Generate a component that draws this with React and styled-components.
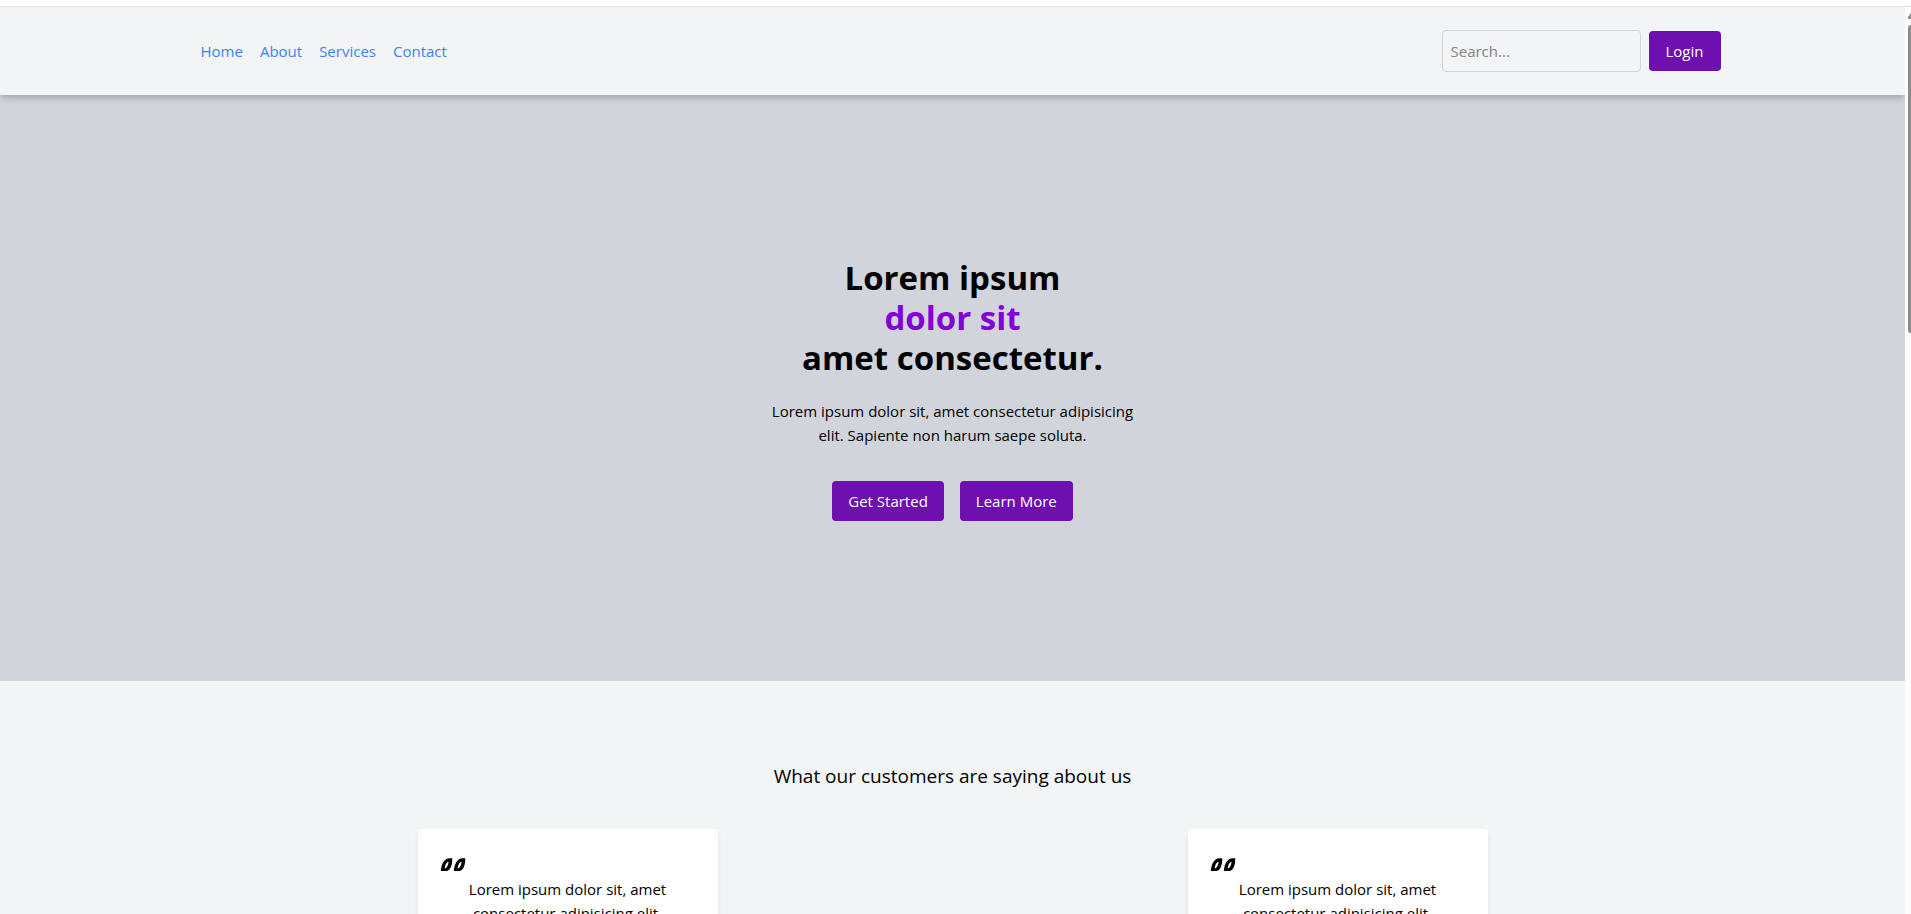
import React from 'react';
import styled, { createGlobalStyle } from 'styled-components';

const GlobalStyle = createGlobalStyle`
  *, *::before, *::after { box-sizing: border-box; }
  body {
    margin: 0;
    background: #fff;
    color: #000;
    font-family: "Segoe UI", "Open Sans", "Noto Sans", sans-serif;
    font-size: 15px;
    line-height: 24px;
  }
  h1, h2, p, ul, blockquote { margin: 0; padding: 0; }
`;

const Frame = styled.div`
  height: 100vh;
  padding-top: 6px;
  display: flex;
  overflow: hidden;
`;

const Page = styled.div`
  flex: 1;
  min-width: 0;
  border-top: 1px solid #dfe2dc;
  background: #f3f4f6;
  overflow: hidden;
`;

const Header = styled.header`
  position: relative;
  padding: 23px 0;
  background: #f3f4f6;
  box-shadow: 0 4px 6px -1px rgba(0, 0, 0, 0.1), 0 2px 8px rgba(0, 0, 0, 0.14);
`;

const Container = styled.div`
  width: 100%;
  max-width: 1536px;
  margin: 0 auto;
  display: flex;
  align-items: center;
  justify-content: space-between;
`;

const Nav = styled.nav`
  display: flex;
  gap: 17px;
  padding-left: 16px;
`;

const NavLink = styled.a`
  color: #3b82f6;
  text-decoration: none;
`;

const Actions = styled.form`
  display: flex;
  align-items: center;
  gap: 8px;
`;

const SearchInput = styled.input`
  width: 199px;
  height: 42px;
  padding: 8px;
  border: 1px solid #d1d5db;
  border-radius: 4px;
  background: transparent;
  font: inherit;
  &::placeholder { color: #848484; opacity: 1; }
`;

const Button = styled.button`
  min-width: 72px;
  height: 40px;
  padding: 8px 16px;
  border: 0;
  border-radius: 4px;
  background: #6e0fb0;
  color: #fff;
  font: inherit;
`;

const Hero = styled.section`
  display: flex;
  flex-direction: column;
  align-items: center;
  padding: 163px 0 160px;
  background: #d1d5db;
  text-align: center;
`;

const HeroTitle = styled.h1`
  font-size: 33px;
  line-height: 40px;
  font-weight: 700;
`;

const TitleLine = styled.span`
  display: block;
  color: ${(p) => (p.$accent ? '#8200db' : 'inherit')};
`;

const HeroText = styled.p`
  max-width: 384px;
  margin-top: 21px;
`;

const HeroButtons = styled.div`
  display: flex;
  gap: 16px;
  margin-top: 34px;
`;

const Testimonials = styled.section`
  padding-top: 81px;
`;

const SectionTitle = styled.h2`
  margin-bottom: 39px;
  font-size: 19px;
  line-height: 28px;
  font-weight: 400;
  text-align: center;
`;

const CardRow = styled.div`
  max-width: 1540px;
  margin: 0 auto;
  display: flex;
  justify-content: space-around;
`;

const Card = styled.article`
  width: 300px;
  padding: 24px;
  border-radius: 4px;
  background: #fff;
  box-shadow: 0 4px 6px -1px rgba(0, 0, 0, 0.1);
`;

const QuoteMark = styled.svg`
  display: block;
  width: 24px;
  height: 24px;
  overflow: visible;
`;

const Quote = styled.blockquote`
  padding: 0 16px;
  text-align: center;
`;

const Scrollbar = styled.div`
  width: 6px;
  display: flex;
  flex-direction: column;
  align-items: flex-end;
  border-top: 1px solid #dfe2dc;
  background: #fcfcfc;
  overflow: hidden;
`;

const ScrollArrow = styled.svg`
  flex: none;
  width: 3px;
  height: 6px;
  margin: 6px 0;
`;

const ScrollThumb = styled.div`
  flex: none;
  width: 3px;
  height: 34%;
  border-radius: 3px 0 0 3px;
  background: #8b8b8b;
`;

const links = ['Home', 'About', 'Services', 'Contact'];
const reviews = ['first', 'second'];

export default function App() {
  return (
    <>
      <GlobalStyle />
      <Frame>
        <Page>
          <Header>
            <Container>
              <Nav>
                {links.map((l) => (
                  <NavLink key={l} href={`#${l.toLowerCase()}`}>{l}</NavLink>
                ))}
              </Nav>
              <Actions>
                <SearchInput type="text" placeholder="Search..." aria-label="Search" />
                <Button type="button">Login</Button>
              </Actions>
            </Container>
          </Header>
          <Hero>
            <HeroTitle>
              <TitleLine>Lorem ipsum</TitleLine>
              <TitleLine $accent>dolor sit</TitleLine>
              <TitleLine>amet consectetur.</TitleLine>
            </HeroTitle>
            <HeroText>
              Lorem ipsum dolor sit, amet consectetur adipisicing elit. Sapiente non harum saepe soluta.
            </HeroText>
            <HeroButtons>
              <Button type="button">Get Started</Button>
              <Button type="button">Learn More</Button>
            </HeroButtons>
          </Hero>
          <Testimonials>
            <SectionTitle>What our customers are saying about us</SectionTitle>
            <CardRow>
              {reviews.map((r) => (
                <Card key={r}>
                  <QuoteMark viewBox="0 0 24 24" aria-hidden="true">
                    <defs>
                      <path
                        id={`mark-${r}`}
                        fillRule="evenodd"
                        d="M-1.2 18L-0.8 15C0 10 3 5.2 7.5 5.2H10.2V7.5C10 12.5 8 18 4.2 18ZM2.8 15.4C5 15.4 6.4 11.5 6.6 8.8C4.4 9.2 3 12.5 2.8 15.4Z"
                      />
                    </defs>
                    <use href={`#mark-${r}`} />
                    <use href={`#mark-${r}`} x="13" />
                  </QuoteMark>
                  <Quote>Lorem ipsum dolor sit, amet consectetur adipisicing elit.</Quote>
                </Card>
              ))}
            </CardRow>
          </Testimonials>
        </Page>
        <Scrollbar aria-hidden="true">
          <ScrollArrow viewBox="0 0 3 6">
            <path d="M3 0V6H0V4Z" fill="#8b8b8b" />
          </ScrollArrow>
          <ScrollThumb />
        </Scrollbar>
      </Frame>
    </>
  );
}
